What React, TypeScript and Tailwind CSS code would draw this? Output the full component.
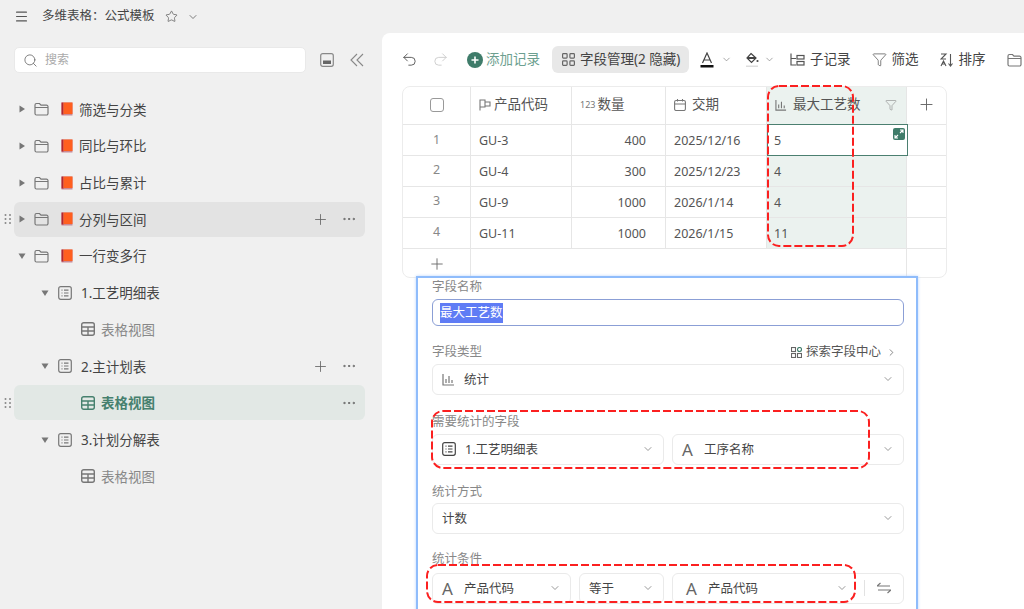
import type { ReactNode } from "react";
import { ChevronDown, ChevronRight, Ellipsis, Funnel, Menu, Plus, Redo2, Search, Star, Undo2 } from "lucide-react";

function Caret({ open }: { open?: boolean }) {
  return (
    <svg width="10" height="10" viewBox="0 0 10 10" className="shrink-0 text-[#777]">
      {open ? <path d="M1.5 2.5h7L5 8z" fill="currentColor" /> : <path d="M2.5 1.5v7L8 5z" fill="currentColor" />}
    </svg>
  );
}

function FolderIcon() {
  return (
    <svg width="15" height="14" viewBox="0 0 15 14" fill="none" stroke="#777" strokeWidth="1.2" className="shrink-0">
      <path d="M1 3a1.5 1.5 0 0 1 1.5-1.5h3L7 3.2h5.5A1.5 1.5 0 0 1 14 4.7v6.8a1.5 1.5 0 0 1-1.5 1.5h-10A1.5 1.5 0 0 1 1 11.500zM1 5.500h13" />
    </svg>
  );
}

function BookIcon() {
  return (
    <svg width="12" height="14" viewBox="0 0 12 14" className="shrink-0">
      <rect x="0.5" y="0.5" width="11" height="13" fill="#c98a96" />
      <rect x="0.5" y="0.5" width="2" height="12" fill="#b3262e" />
      <rect x="2.500" y="0.5" width="9" height="11.500" fill="#ff5f1f" />
    </svg>
  );
}

function SheetIcon({ color = "#777" }: { color?: string }) {
  return (
    <svg width="14" height="14" viewBox="0 0 14 14" fill="none" stroke={color} strokeWidth="1.200" className="shrink-0">
      <rect x="0.700" y="0.700" width="12.600" height="12.600" rx="2" />
      <path d="M3.500 4.200h1M6 4.200h4.500M3.500 7h1M6 7h4.500M3.500 9.800h1M6 9.800h4.500" />
    </svg>
  );
}

function GridIcon({ color = "#777" }: { color?: string }) {
  return (
    <svg width="14" height="14" viewBox="0 0 14 14" fill="none" stroke={color} strokeWidth="1.400" className="shrink-0">
      <rect x="0.700" y="0.700" width="12.600" height="12.600" rx="2" />
      <path d="M0.700 5h12.600M0.700 9h12.600M7 5v8.300" />
    </svg>
  );
}

function Dots() {
  return (
    <svg width="8" height="11" viewBox="0 0 8 11" fill="#888" className="absolute left-[4px] top-1/2 -translate-y-1/2">
      <circle cx="1.500" cy="1.500" r="1" />
      <circle cx="6" cy="1.500" r="1" />
      <circle cx="1.500" cy="5.500" r="1" />
      <circle cx="6" cy="5.500" r="1" />
      <circle cx="1.500" cy="9.500" r="1" />
      <circle cx="6" cy="9.500" r="1" />
    </svg>
  );
}

function StatIcon({ size = 13, color = "#777" }: { size?: number; color?: string }) {
  return (
    <svg width={size} height={size} viewBox="0 0 13 13" fill="none" stroke={color} strokeWidth="1.200" className="shrink-0">
      <path d="M1 1v11h11M4 6v4M7 3v7M10 7v3" />
    </svg>
  );
}

type TreeRow = {
  label: string;
  indent: number;
  kind: "folder" | "sheet" | "view";
  open?: boolean;
  state?: "hover" | "active" | "actions";
};

const tree: TreeRow[] = [
  { label: "筛选与分类", indent: 0, kind: "folder" },
  { label: "同比与环比", indent: 0, kind: "folder" },
  { label: "占比与累计", indent: 0, kind: "folder" },
  { label: "分列与区间", indent: 0, kind: "folder", state: "hover" },
  { label: "一行变多行", indent: 0, kind: "folder", open: true },
  { label: "1.工艺明细表", indent: 1, kind: "sheet", open: true },
  { label: "表格视图", indent: 2, kind: "view" },
  { label: "2.主计划表", indent: 1, kind: "sheet", open: true, state: "actions" },
  { label: "表格视图", indent: 2, kind: "view", state: "active" },
  { label: "3.计划分解表", indent: 1, kind: "sheet", open: true },
  { label: "表格视图", indent: 2, kind: "view" },
];

function TreeItem({ row }: { row: TreeRow }) {
  const active = row.state === "active";
  const bg = row.state === "hover" ? "bg-[#e3e3e3]" : active ? "bg-[#e2e8e5]" : "";
  const pad = row.indent === 0 ? "pl-[3px]" : row.indent === 1 ? "pl-[26px]" : "pl-[67px]";
  return (
    <div className="relative h-[36.700px] flex items-center">
      {(row.state === "hover" || active) && <Dots />}
      <div className={`ml-[14px] w-[351px] h-[35px] rounded-[6px] flex items-center ${pad} ${bg}`}>
        {row.kind !== "view" && <Caret open={row.open} />}
        {row.kind === "folder" && (
          <>
            <span className="ml-[7px]"><FolderIcon /></span>
            <span className="ml-[12px]"><BookIcon /></span>
            <span className="ml-[6px] pt-[1px] text-[13.500px] text-[#444]">{row.label}</span>
          </>
        )}
        {row.kind === "sheet" && (
          <>
            <span className="ml-[8px]"><SheetIcon /></span>
            <span className="ml-[9px] pt-[1px] text-[13.500px] text-[#444]">{row.label}</span>
          </>
        )}
        {row.kind === "view" && (
          <>
            <GridIcon color={active ? "#46806e" : "#777"} />
            <span className={`ml-[6px] pt-[1px] text-[13.500px] ${active ? "font-bold text-[#46806e]" : "text-[#888]"}`}>{row.label}</span>
          </>
        )}
        <div className="ml-auto mr-[8px] flex items-center gap-[12px] text-[#666]">
          {(row.state === "hover" || row.state === "actions") && <Plus size={17} strokeWidth={1.200} />}
          {(row.state === "hover" || row.state === "actions" || active) && <Ellipsis size={16} strokeWidth={1.500} />}
        </div>
      </div>
    </div>
  );
}

function Sidebar() {
  return (
    <aside className="w-[382px] shrink-0 h-full">
      <div className="h-[33px] pl-[14px] flex items-center text-[#555]">
        <Menu size={15} strokeWidth={1.700} />
        <span className="ml-[13px] text-[12.500px] text-[#444]">多维表格：公式模板</span>
        <Star size={13} strokeWidth={1.300} className="ml-[10px]" />
        <ChevronDown size={12} strokeWidth={1.500} className="ml-[9px]" />
      </div>
      <div className="mt-[14px] h-[26px] flex items-center">
        <div className="ml-[14px] w-[292px] h-[26px] rounded-[5px] bg-white border border-[#e9e9e9] flex items-center pl-[8px]">
          <Search size={15} strokeWidth={1.300} className="text-[#666]" />
          <span className="ml-[7px] text-[12px] text-[#aaa]">搜索</span>
        </div>
        <svg width="14" height="14" viewBox="0 0 14 14" fill="none" className="ml-[14px]">
          <rect x="0.700" y="0.700" width="12.600" height="12.600" rx="2" stroke="#888" strokeWidth="1.200" />
          <rect x="3" y="7.500" width="8" height="3.500" fill="#666" />
        </svg>
        <svg width="14" height="14" viewBox="0 0 14 14" fill="none" stroke="#888" strokeWidth="1.100" className="ml-[16px]">
          <path d="M7 1 1 7l6 6M13 1 7 7l6 6" />
        </svg>
      </div>
      <div className="mt-[18px]">
        {tree.map((row, i) => (
          <TreeItem key={i} row={row} />
        ))}
      </div>
    </aside>
  );
}

function ToolItem({ icon, label }: { icon: ReactNode; label: string }) {
  return (
    <div className="flex items-center gap-[5px] text-[13.500px] text-[#444] whitespace-nowrap">
      {icon}
      <span>{label}</span>
    </div>
  );
}

function Toolbar() {
  return (
    <div className="h-[27px] mt-[13px] pl-[19px] flex items-center text-[#555]">
      <Undo2 size={17} strokeWidth={1.300} />
      <Redo2 size={17} strokeWidth={1.300} className="ml-[14px] text-[#ccc]" />
      <svg width="16" height="16" viewBox="0 0 16 16" className="ml-[18px] shrink-0">
        <circle cx="8" cy="8" r="8" fill="#3f7c6a" />
        <path d="M8 4.500v7M4.500 8h7" stroke="#fff" strokeWidth="1.600" />
      </svg>
      <span className="ml-[3px] text-[13.500px] text-[#6d9f90] whitespace-nowrap">添加记录</span>
      <div className="ml-[12px] h-[27px] w-[137px] shrink-0 rounded-[6px] bg-[#e8e8e8] flex items-center pl-[10px] gap-[5px] text-[13.500px] text-[#444] whitespace-nowrap">
        <svg width="13" height="13" viewBox="0 0 13 13" fill="none" stroke="#666" strokeWidth="1.200" className="shrink-0">
          <rect x="0.600" y="0.600" width="4.500" height="4.500" rx="0.800" />
          <rect x="7.900" y="0.600" width="4.500" height="4.500" rx="0.800" />
          <rect x="0.600" y="7.900" width="4.500" height="4.500" rx="0.800" />
          <rect x="7.900" y="7.900" width="4.500" height="4.500" rx="0.800" />
        </svg>
        字段管理(2 隐藏)
      </div>
      <svg width="14" height="16" viewBox="0 0 14 16" fill="none" className="ml-[11px] shrink-0">
        <path d="M2.500 11 7 1l4.500 10M4 8h6" stroke="#444" strokeWidth="1.200" />
        <rect x="0.500" y="13" width="13" height="2.500" fill="#111" />
      </svg>
      <ChevronDown size={11} strokeWidth={1.400} className="ml-[7px] text-[#777]" />
      <svg width="15" height="16" viewBox="0 0 15 16" fill="none" className="ml-[13px] shrink-0">
        <path d="M6 1.500 11 6 6.500 10.500 2 6z" stroke="#444" strokeWidth="1.200" />
        <path d="M2 6h9" stroke="#444" strokeWidth="2" />
        <circle cx="12.500" cy="9" r="1.100" fill="#444" />
        <rect x="1" y="13.500" width="12" height="1.500" fill="#ddd" />
      </svg>
      <ChevronDown size={11} strokeWidth={1.400} className="ml-[4px] text-[#777]" />
      <div className="ml-[15px] flex items-center gap-[21px]">
        <ToolItem
          label="子记录"
          icon={
            <svg width="15" height="13" viewBox="0 0 15 13" fill="none" stroke="#555" strokeWidth="1.200" className="shrink-0">
              <path d="M1 0.500v11.500h5M1 5.500h5" />
              <rect x="7" y="2.500" width="7" height="3.500" />
              <rect x="7" y="8.500" width="7" height="3.500" />
            </svg>
          }
        />
        <ToolItem label="筛选" icon={<Funnel size={15} strokeWidth={1.200} className="text-[#555]" />} />
        <ToolItem
          label="排序"
          icon={
            <svg width="14" height="14" viewBox="0 0 14 14" fill="none" stroke="#555" strokeWidth="1.100" className="shrink-0">
              <path d="M1 1h5L1 6h5M1 13l2.500-5L6 13M2 11h3M10.500 1v12M8.500 10.500l2 2.500 2-2.500" />
            </svg>
          }
        />
        <FolderIcon />
      </div>
    </div>
  );
}

const rows = [
  { id: 1, code: "GU-3", qty: "400", date: "2025/12/16", count: "5" },
  { id: 2, code: "GU-4", qty: "300", date: "2025/12/23", count: "4" },
  { id: 3, code: "GU-9", qty: "1000", date: "2026/1/14", count: "4" },
  { id: 4, code: "GU-11", qty: "1000", date: "2026/1/15", count: "11" },
];

function HeadCell({ icon, label, gap }: { icon: ReactNode; label: string; gap: string }) {
  return (
    <div className={`h-[37px] pb-[2px] border-r border-[#e6e6e6] flex items-center pl-[8px] text-[13.500px] text-[#555] ${gap}`}>
      {icon}
      {label}
    </div>
  );
}

function DataTable() {
  return (
    <div className="relative mt-[13px] ml-[20px] w-[545px] h-[192px] rounded-[8px] border border-[#ececec] overflow-hidden">
      <div className="grid grid-cols-[68px_101px_94px_101px_140px_39px] border-b border-[#e6e6e6]">
        <div className="h-[37px] pb-[2px] border-r border-[#e6e6e6] flex items-center justify-center">
          <div className="w-[14px] h-[14px] rounded-[3px] border border-[#999]" />
        </div>
        <HeadCell
          label="产品代码"
          gap="gap-[3px]"
          icon={
            <svg width="12" height="12" viewBox="0 0 12 12" fill="none" stroke="#777" strokeWidth="1.100" className="shrink-0">
              <path d="M1 0.500V11.500M1 1h5v7H1M6 3h5v4H6" />
            </svg>
          }
        />
        <HeadCell label="数量" gap="gap-[2px]" icon={<span className="text-[9px] text-[#777]">123</span>} />
        <HeadCell
          label="交期"
          gap="gap-[6px]"
          icon={
            <svg width="12" height="12" viewBox="0 0 12 12" fill="none" stroke="#777" strokeWidth="1.100" className="shrink-0">
              <rect x="0.600" y="1.500" width="10.800" height="10" rx="1.500" />
              <path d="M0.600 5h10.800M3.500 0v2.500M8.500 0v2.500" />
            </svg>
          }
        />
        <div className="h-[37px] pb-[2px] bg-[#ebf2ef] border-r border-[#e6e6e6] flex items-center pl-[8px] gap-[6px] text-[13.500px] text-[#555]">
          <StatIcon size={12} />
          最大工艺数
          <Funnel size={12} strokeWidth={1.200} className="ml-auto mr-[9px] text-[#888]" />
        </div>
        <div className="h-[37px] pb-[2px] flex items-center justify-center text-[#666]">
          <Plus size={19} strokeWidth={1.200} />
        </div>
      </div>
      {rows.map((r, i) => (
        <div key={r.id} className="grid grid-cols-[68px_101px_94px_101px_140px_39px] h-[31px] border-b border-[#e6e6e6] text-[12.500px] text-[#555]">
          <div className="border-r border-[#e6e6e6] flex items-center justify-center text-[#888] -mt-[1px]">{r.id}</div>
          <div className="border-r border-[#e6e6e6] flex items-center pl-[8px] pt-[2px]">{r.code}</div>
          <div className="border-r border-[#e6e6e6] flex items-center justify-end pr-[19px] pt-[2px]">{r.qty}</div>
          <div className="border-r border-[#e6e6e6] flex items-center pl-[8px] pt-[2px]">{r.date}</div>
          {i === 0 ? (
            <div className="relative -mt-[1px] h-[32px] w-[141px] border border-[#4b7f70] bg-white flex items-center pl-[6px] pt-[2px]">
              {r.count}
              <svg width="12" height="12" viewBox="0 0 12 12" className="absolute right-[2px] top-[3px]">
                <rect width="12" height="12" rx="2" fill="#3f7c6a" />
                <path d="M7 2h3v3M10 2 7 5M5 10H2V7M2 10l3-3" fill="none" stroke="#fff" strokeWidth="1.100" />
              </svg>
            </div>
          ) : (
            <div className="bg-[#ebf2ef] border-r border-[#e6e6e6] flex items-center pl-[7px] pt-[2px]">{r.count}</div>
          )}
          <div />
        </div>
      ))}
      <div className="grid grid-cols-[68px_101px_94px_101px_140px_39px] h-[30px]">
        <div className="border-r border-[#e6e6e6] flex items-center justify-center text-[#666]">
          <Plus size={18} strokeWidth={1.200} />
        </div>
        <div className="col-span-3" />
        <div className="border-r border-[#e6e6e6]" />
      </div>
    </div>
  );
}

function Field({ label, className }: { label: string; className: string }) {
  return <div className={`text-[12.500px] leading-[16px] text-[#888] ${className}`}>{label}</div>;
}

function SelectBox({ className, icon, label }: { className: string; icon?: ReactNode; label: string }) {
  return (
    <div className={`h-[31px] rounded-[6px] border border-[#eaeaea] flex items-center pl-[9px] pr-[9px] text-[12.500px] text-[#444] whitespace-nowrap ${className}`}>
      {icon}
      <span className="pt-[2px]">{label}</span>
      <ChevronDown size={12} strokeWidth={1.500} className="ml-auto shrink-0 text-[#777]" />
    </div>
  );
}

function LetterA() {
  return <span className="w-[22px] shrink-0 text-[17px] leading-none text-[#666]">A</span>;
}

function FieldPanel() {
  return (
    <div className="-mt-[2px] ml-[34px] w-[502px] h-[340px] relative border-2 border-[#8fbcfb] bg-white pl-[14px] pr-[12px] pt-[1px] shadow-[0_0_3px_#bcd6fb]">
      <Field label="字段名称" className="" />
      <div className="mt-[4px] h-[27px] rounded-[6px] border border-[#8b9fd6] flex items-center pl-[7px]">
        <span className="bg-[#5f7cf5] text-white text-[12.500px] leading-[20px]">最大工艺数</span>
      </div>
      <div className="mt-[17px] flex items-center justify-between">
        <Field label="字段类型" className="" />
        <div className="flex items-center text-[12.500px] text-[#555] pr-[7px]">
          <svg width="11" height="11" viewBox="0 0 11 11" className="mr-[4px]" fill="none" stroke="#666" strokeWidth="1.100">
            <rect x="0.500" y="0.500" width="4" height="4" />
            <rect x="0.500" y="6.500" width="4" height="4" />
            <rect x="6.500" y="6.500" width="4" height="4" />
            <circle cx="8.500" cy="2.500" r="2" stroke="#3f7c6a" />
          </svg>
          探索字段中心
          <ChevronRight size={11} strokeWidth={1.500} className="ml-[5px]" />
        </div>
      </div>
      <SelectBox className="mt-[2px]" icon={<span className="mr-[9px]"><StatIcon /></span>} label="统计" />
      <Field label="需要统计的字段" className="mt-[19px]" />
      <div className="mt-[4px] flex gap-[8px]">
        <SelectBox className="w-[232px]" icon={<span className="mr-[9px]"><SheetIcon color="#444" /></span>} label="1.工艺明细表" />
        <SelectBox className="w-[232px]" icon={<LetterA />} label="工序名称" />
      </div>
      <Field label="统计方式" className="mt-[19px]" />
      <SelectBox className="mt-[3px]" label="计数" />
      <Field label="统计条件" className="mt-[17px]" />
      <div className="mt-[6px] flex gap-[8px]">
        <SelectBox className="w-[139px]" icon={<LetterA />} label="产品代码" />
        <SelectBox className="w-[85px]" label="等于" />
        <div className="flex-1 h-[31px] rounded-[6px] border border-[#eaeaea] flex items-center">
          <div className="w-[191px] flex items-center pl-[13px] pr-[16px] text-[12.500px] text-[#444]">
            <LetterA />
            <span className="pt-[2px]">产品代码</span>
            <ChevronDown size={12} strokeWidth={1.500} className="ml-auto text-[#777]" />
          </div>
          <div className="h-[16px] border-l border-[#e2e2e2]" />
          <svg width="14" height="12" viewBox="0 0 14 12" fill="none" stroke="#777" strokeWidth="1.200" className="ml-[12px]">
            <path d="M0 4h13M0 4l3.500-3M14 8H1M14 8l-3.500 3" />
          </svg>
        </div>
      </div>
    </div>
  );
}

// hand-drawn annotation loops, they sit over the table and the form
function RedLoop({ className, w, h }: { className: string; w: number; h: number }) {
  return (
    <svg width={w} height={h} className={`absolute pointer-events-none ${className}`} fill="none">
      <rect x="1" y="1" width={w - 2} height={h - 2} rx="11" stroke="#fb2020" strokeWidth="2" strokeDasharray="8 3" />
    </svg>
  );
}

export default function App() {
  return (
    <div className="relative w-[1024px] h-[609px] overflow-hidden flex bg-[#f0f0f0] font-['Noto_Sans','Noto_Sans_CJK_SC',sans-serif]">
      <Sidebar />
      <main className="flex-1 mt-[33px] h-[576px] overflow-hidden rounded-tl-[8px] bg-white">
        <Toolbar />
        <DataTable />
        <FieldPanel />
      </main>
      <RedLoop className="left-[767px] top-[85px]" w={87} h={162} />
      <RedLoop className="left-[431px] top-[410px]" w={439} h={59} />
      <RedLoop className="left-[426px] top-[564px]" w={430} h={39} />
    </div>
  );
}
